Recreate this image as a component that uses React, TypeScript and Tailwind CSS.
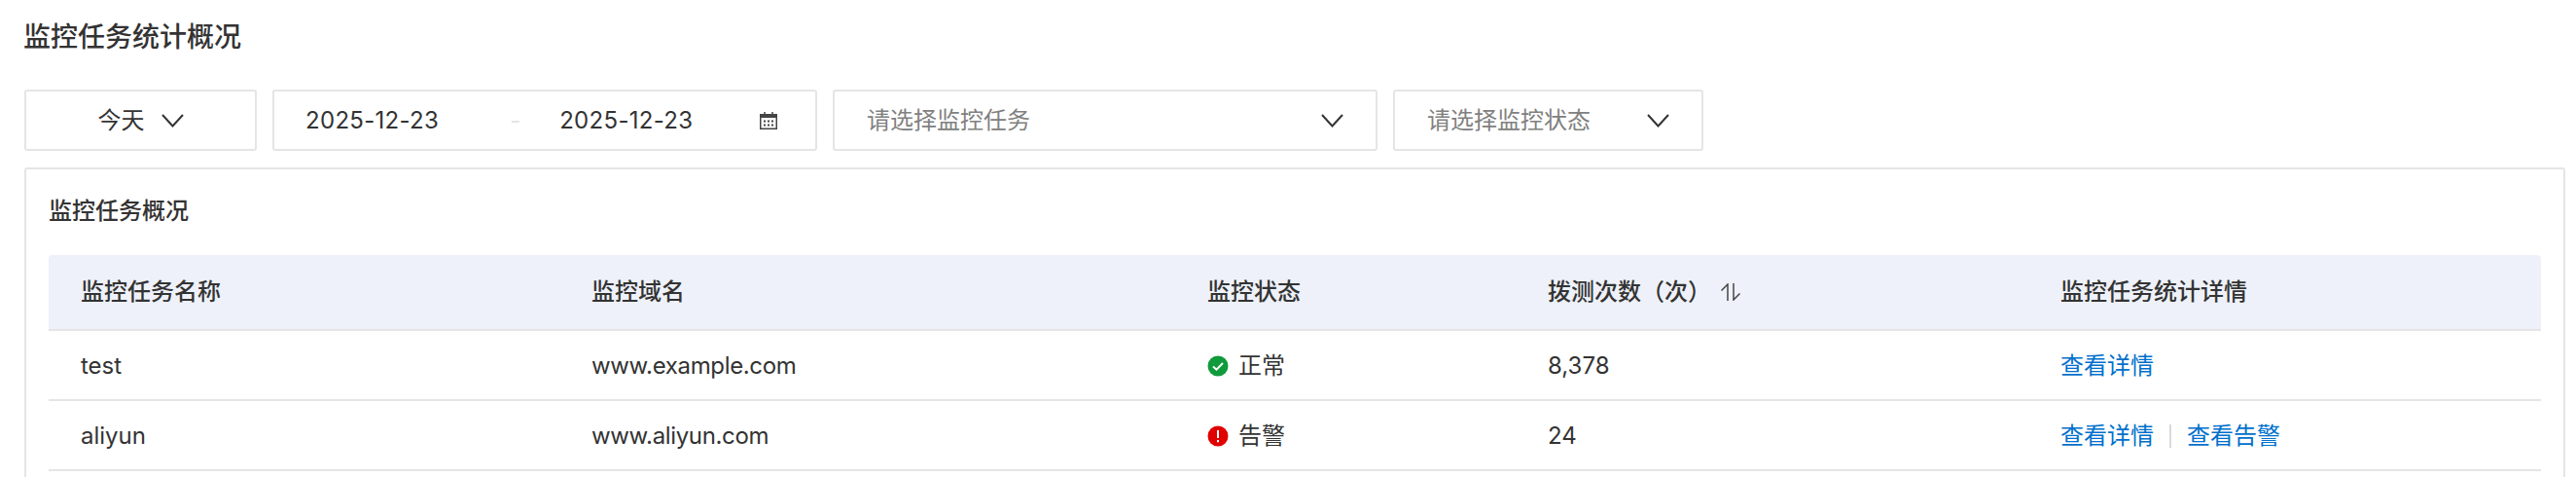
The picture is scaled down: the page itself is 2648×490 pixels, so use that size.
const FONT = "font-['Inter','Noto_Sans_CJK_SC',sans-serif]";

function Chevron({ className }: { className: string }) {
  return (
    <svg viewBox="0 0 23 14" fill="none" className={className}>
      <path d="M1 1l10.5 11.5L22 1" stroke="#333" strokeWidth="2" />
    </svg>
  );
}

function CalendarIcon() {
  return (
    <svg width="18" height="18" viewBox="0 0 18 18" fill="none" className="shrink-0">
      <rect x="0.75" y="2.75" width="16.5" height="14.5" stroke="#444" strokeWidth="1.5" />
      <rect x="1" y="3" width="16" height="3" fill="#444" />
      <path d="M5 0v5M13 0v5" stroke="#444" strokeWidth="1.5" />
      <path d="M4 8.5h2v2H4zM8 8.5h2v2H8zM12 8.5h2v2h-2zM4 12.5h2v2H4zM8 12.5h2v2H8zM12 12.5h2v2h-2z" fill="#444" />
    </svg>
  );
}

function SortIcon() {
  return (
    <svg width="20" height="18" viewBox="0 0 20 18" fill="none" className="ml-[10px] shrink-0">
      <path d="M7 18V1L0.5 7.5" stroke="#444" strokeWidth="1.5" />
      <path d="M13 0v17l6.5-6.5" stroke="#444" strokeWidth="1.5" />
    </svg>
  );
}

function StatusIcon({ ok }: { ok: boolean }) {
  return (
    <svg width="22" height="22" viewBox="0 0 22 22" className="shrink-0">
      <circle cx="11" cy="11" r="10.5" fill={ok ? "#0f9a3b" : "#e00000"} />
      {ok ? (
        <path d="M6 11.5l3.5 3.2L16 8" stroke="#fff" strokeWidth="2" fill="none" />
      ) : (
        <path d="M11 5v8M11 15v2.2" stroke="#fff" strokeWidth="2" fill="none" />
      )}
    </svg>
  );
}

const rows = [
  { name: "test", domain: "www.example.com", ok: true, status: "正常", count: "8,378" },
  { name: "aliyun", domain: "www.aliyun.com", ok: false, status: "告警", count: "24" },
];

const box = "h-[63px] flex items-center border-2 border-[#e5e5e5] rounded-[3px] bg-white";
const th = "text-left font-medium pl-[33px] p-0 align-middle border-b-2 border-[#e5e5e5]";
const td = "pl-[33px] pr-0 pb-0 pt-[2px] align-middle border-b-2 border-[#e5e5e5] h-[72px]";

export default function App() {
  return (
    <div className={`${FONT} h-[490px] overflow-hidden bg-white text-[24px] text-[#333] pl-[25px] pr-[11px]`}>
      <h1 className="text-[28px] font-medium leading-[38px] pt-[19px] h-[92px] -ml-[1px]">监控任务统计概况</h1>

      <div className="flex h-[63px]">
        <div className={`${box} w-[239px] justify-center gap-[17px]`}>
          <span>今天</span>
          <Chevron className="w-[23px] h-[14px]" />
        </div>
        <div className={`${box} w-[560px] ml-[16px] pl-[32px] pr-[39px]`}>
          <span className="tracking-[0.3px]">2025-12-23</span>
          <span className="text-[#e5e5e5] ml-[73px]">-</span>
          <span className="ml-[40px] tracking-[0.3px]">2025-12-23</span>
          <span className="flex-1" />
          <CalendarIcon />
        </div>
        <div className={`${box} w-[560px] ml-[16px] pl-[33px] pr-[33px] justify-between`}>
          <span className="text-[#808080]">请选择监控任务</span>
          <Chevron className="w-[23px] h-[14px]" />
        </div>
        <div className={`${box} w-[319px] ml-[16px] pl-[33px] pr-[33px] justify-between`}>
          <span className="text-[#808080]">请选择监控状态</span>
          <Chevron className="w-[23px] h-[14px]" />
        </div>
      </div>

      <div className="mt-[17px] border-2 border-[#e5e5e5] rounded-[3px] px-[23px] pb-[40px]">
        <h2 className="text-[24px] font-medium leading-[34px] pt-[26px] h-[88px]">监控任务概况</h2>
        <table className="w-full table-fixed border-separate border-spacing-0">
          <colgroup>
            <col className="w-[525px]" />
            <col className="w-[633px]" />
            <col className="w-[350px]" />
            <col className="w-[527px]" />
            <col className="w-[527px]" />
          </colgroup>
          <thead>
            <tr className="bg-[#eef1f9]">
              <th className={`${th} h-[78px] rounded-tl-[4px]`}>监控任务名称</th>
              <th className={th}>监控域名</th>
              <th className={th}>监控状态</th>
              <th className={th}>
                <div className="flex items-center">
                  <span>拨测次数（次）</span>
                  <SortIcon />
                </div>
              </th>
              <th className={`${th} rounded-tr-[4px]`}>监控任务统计详情</th>
            </tr>
          </thead>
          <tbody>
            {rows.map((row) => (
              <tr key={row.name}>
                <td className={td}>{row.name}</td>
                <td className={`${td} tracking-[-0.35px]`}>{row.domain}</td>
                <td className={td}>
                  <div className="flex items-center gap-[10px]">
                    <StatusIcon ok={row.ok} />
                    <span>{row.status}</span>
                  </div>
                </td>
                <td className={td}>{row.count}</td>
                <td className={td}>
                  <div className="flex items-center text-[#0070cc]">
                    <span>查看详情</span>
                    {!row.ok && (
                      <>
                        <span className="w-[2px] h-[24px] bg-[#d9d9d9] mx-[16px]" />
                        <span>查看告警</span>
                      </>
                    )}
                  </div>
                </td>
              </tr>
            ))}
          </tbody>
        </table>
      </div>
    </div>
  );
}
